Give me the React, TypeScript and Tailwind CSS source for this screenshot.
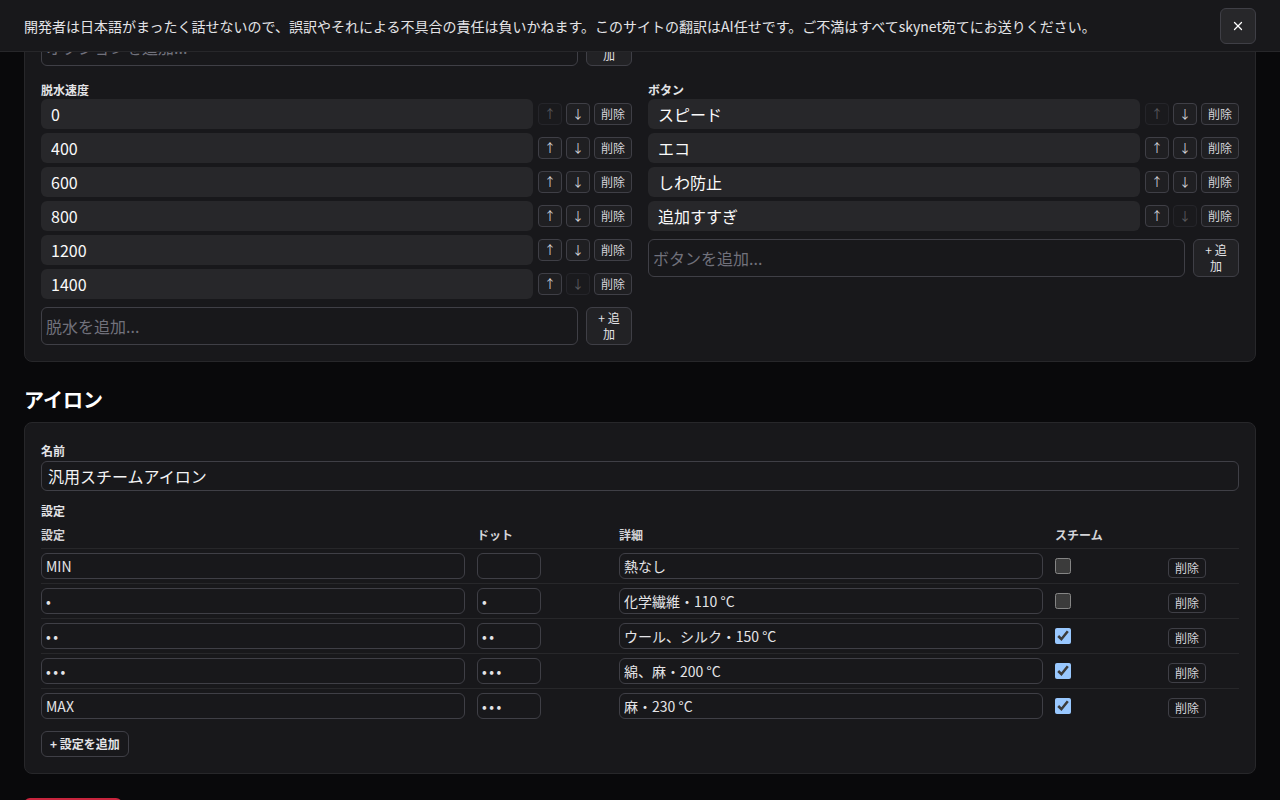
import { useLayoutEffect, useRef, useState, type ReactNode, type RefObject } from "react";
import { X } from "lucide-react";

type IronSetting = {
  label: string;
  dots: string;
  detail: string;
  steam: boolean;
};

const courses = ["標準", "おいそぎ", "おしゃれ着", "毛布", "つけおき", "槽洗浄"];
const temperatures = ["水", "30 °C", "40 °C", "60 °C"];
const spinSpeeds = ["0", "400", "600", "800", "1200", "1400"];
const washerButtons = ["スピード", "エコ", "しわ防止", "追加すすぎ"];

const ironSettings: IronSetting[] = [
  { label: "MIN", dots: "", detail: "熱なし", steam: false },
  { label: "•", dots: "•", detail: "化学繊維・110 °C", steam: false },
  { label: "••", dots: "••", detail: "ウール、シルク・150 °C", steam: true },
  { label: "•••", dots: "•••", detail: "綿、麻・200 °C", steam: true },
  { label: "MAX", dots: "•••", detail: "麻・230 °C", steam: true },
];

const isDots = (v: string) => /^•+$/.test(v);

function SmallButton({
  children,
  disabled,
  wide,
}: {
  children: ReactNode;
  disabled?: boolean;
  wide?: boolean;
}) {
  return (
    <button
      disabled={disabled}
      className={
        "flex h-[22px] shrink-0 items-center justify-center rounded border border-[#3f3f46] bg-[#1f1f22] text-xs leading-none text-zinc-300 " +
        (wide ? "w-[38px] " : "w-6 ") +
        (disabled ? "opacity-35" : "")
      }
    >
      {children}
    </button>
  );
}

function ListEditor({
  label,
  items,
  placeholder,
  addRef,
}: {
  label: string;
  items: string[];
  placeholder: string;
  addRef?: RefObject<HTMLDivElement | null>;
}) {
  const [draft, setDraft] = useState("");

  return (
    <div>
      <p className="mb-px text-xs leading-4 font-bold text-zinc-200">{label}</p>
      <div className="flex flex-col gap-1">
        {items.map((item, i) => (
          <div key={item} className="flex items-center gap-1">
            <input
              value={item}
              readOnly
              className="mr-px h-[30px] min-w-0 flex-1 rounded-md bg-[#27272a] px-2.5 text-base text-zinc-50 outline-none"
            />
            <SmallButton disabled={i === 0}>↑</SmallButton>
            <SmallButton disabled={i === items.length - 1}>↓</SmallButton>
            <SmallButton wide>削除</SmallButton>
          </div>
        ))}
        <div ref={addRef} className="mt-1 flex gap-2">
          <input
            value={draft}
            onChange={(e) => setDraft(e.target.value)}
            placeholder={placeholder}
            className="h-[38px] min-w-0 flex-1 rounded-md border border-[#3f3f46] bg-transparent px-1 text-base text-zinc-50 outline-none placeholder:text-zinc-500"
          />
          <button className="h-[38px] w-[46px] shrink-0 rounded-md border border-[#3f3f46] bg-[#222225] px-2 text-xs leading-4 text-zinc-200">
            + 追加
          </button>
        </div>
      </div>
    </div>
  );
}

function Field({ value, narrow }: { value: string; narrow?: boolean }) {
  return (
    <input
      value={value}
      readOnly
      className={
        "h-[26px] rounded-md border border-[#3f3f46] bg-transparent px-1 text-sm text-zinc-200 outline-none " +
        (narrow ? "w-16 " : "w-full ") +
        (isDots(value) ? "tracking-[2.5px]" : "")
      }
    />
  );
}

function IronRow({ row, last }: { row: IronSetting; last: boolean }) {
  return (
    <div
      className={
        "grid grid-cols-[436px_142px_436px_113px_71px] items-center py-1 " +
        (last ? "" : "border-b border-[#27272a]")
      }
    >
      <div className="pr-3">
        <Field value={row.label} />
      </div>
      <div>
        <Field value={row.dots} narrow />
      </div>
      <div className="pr-3">
        <Field value={row.detail} />
      </div>
      <div className="flex">
        <input type="checkbox" defaultChecked={row.steam} className="m-0 h-4 w-4" />
      </div>
      <div>
        <button className="h-5 w-[38px] rounded border border-[#3f3f46] text-xs text-zinc-300">
          削除
        </button>
      </div>
    </div>
  );
}

export default function App() {
  const pageRef = useRef<HTMLDivElement>(null);
  const optionAddRef = useRef<HTMLDivElement>(null);

  // keep the washer card scrolled so the iron section is in view
  useLayoutEffect(() => {
    const align = () => {
      const box = pageRef.current;
      const anchor = optionAddRef.current;
      if (!box || !anchor) return;
      const y =
        anchor.getBoundingClientRect().top - box.getBoundingClientRect().top + box.scrollTop;
      box.scrollTop = y - 28;
    };
    align();
    document.fonts?.ready.then(align);
  }, []);

  return (
    <div className="font-['Noto_Sans_CJK_JP','Noto_Sans',sans-serif] text-zinc-100 [color-scheme:dark]">
      <div ref={pageRef} className="h-screen overflow-hidden bg-[#09090b]">
        <div className="px-6 pt-20 pb-16">
          <h1 className="mb-6 text-2xl font-bold text-white">家電設定</h1>

          <h2 className="mb-2 text-xl leading-7 font-bold text-white">洗濯機</h2>
          <section className="rounded-lg border border-[#27272a] bg-[#18181b] px-4 pt-5 pb-4">
            <p className="mb-0.5 text-xs leading-4 font-bold text-zinc-200">名前</p>
            <input
              defaultValue="ドラム式洗濯機"
              className="mb-3 h-[30px] w-full rounded-md border border-[#3f3f46] bg-transparent px-1.5 text-base outline-none"
            />
            <div className="grid grid-cols-2 gap-4">
              <ListEditor
                label="コース"
                items={courses}
                placeholder="オプションを追加..."
                addRef={optionAddRef}
              />
              <ListEditor label="温度" items={temperatures} placeholder="温度を追加..." />
              <ListEditor label="脱水速度" items={spinSpeeds} placeholder="脱水を追加..." />
              <ListEditor label="ボタン" items={washerButtons} placeholder="ボタンを追加..." />
            </div>
          </section>

          <h2 className="mt-6 mb-2 text-xl leading-7 font-bold text-white">アイロン</h2>
          <section className="rounded-lg border border-[#27272a] bg-[#18181b] px-4 pt-5 pb-4">
            <p className="mb-0.5 text-xs leading-4 font-bold text-zinc-200">名前</p>
            <input
              defaultValue="汎用スチームアイロン"
              className="h-[30px] w-full rounded-md border border-[#3f3f46] bg-transparent px-1.5 text-base text-zinc-100 outline-none"
            />

            <p className="mt-3 text-xs leading-4 font-bold text-zinc-200">設定</p>
            <div className="grid grid-cols-[436px_142px_436px_113px_71px] border-b border-[#27272a] pt-2 pb-[5px] text-xs leading-4 font-bold text-zinc-300">
              <span>設定</span>
              <span>ドット</span>
              <span>詳細</span>
              <span>スチーム</span>
              <span />
            </div>
            {ironSettings.map((row, i) => (
              <IronRow key={i} row={row} last={i === ironSettings.length - 1} />
            ))}
            <button className="mt-2 h-[26px] rounded-md border border-[#3f3f46] px-2 text-xs font-bold text-zinc-200">
              + 設定を追加
            </button>
          </section>

          <button className="mt-6 h-9 w-[98px] rounded-md bg-[#c8243d] text-sm text-white">
            リセット
          </button>
        </div>
      </div>

      <div className="fixed inset-x-0 top-0 flex h-[52px] items-center justify-between border-b border-[#27272a] bg-[#18181b] pr-6 pl-6">
        <p className="text-sm text-zinc-200">
          開発者は日本語がまったく話せないので、誤訳やそれによる不具合の責任は負いかねます。このサイトの翻訳はAI任せです。ご不満はすべてskynet宛てにお送りください。
        </p>
        <button className="flex h-9 w-9 items-center justify-center rounded-md border border-[#3f3f46] bg-[#27272a] text-white">
          <X size={14} strokeWidth={2.25} />
        </button>
      </div>
    </div>
  );
}
